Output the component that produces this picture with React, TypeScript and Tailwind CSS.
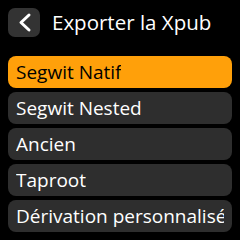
import React from "react";

const items = ["Segwit Natif", "Segwit Nested", "Ancien", "Taproot", "Dérivation personnalisée"];

export default function App() {
  return (
    <div
      className="w-[240px] h-[240px] bg-black overflow-hidden"
      style={{ fontFamily: '"Open Sans", "Noto Sans", sans-serif' }}
    >
      <div className="flex items-center h-[44px] pl-2">
        <div className="w-[32px] h-[29px] rounded-[7px] bg-[#333333] flex items-center justify-center">
          <svg width="32" height="29" viewBox="0 0 32 29">
            <path d="M21 7 L13 14.5 L21 22" fill="none" stroke="white" strokeWidth="3" strokeLinecap="round" strokeLinejoin="round" />
          </svg>
        </div>
        <div className="ml-[12px] text-white text-[20.5px] leading-none">Exporter la Xpub</div>
      </div>
      <div className="flex flex-col gap-[4px] px-2 mt-[12px]">
        {items.map((t, i) => (
          <div
            key={t}
            className={
              i === 0
                ? "h-[32px] rounded-[8px] bg-[#ffa00a] text-black flex items-center px-2"
                : "h-[32px] rounded-[8px] bg-[#2e2e2e] text-white flex items-center px-2"
            }
          >
            <div className="min-w-0 overflow-hidden whitespace-nowrap text-[19px] leading-[32px]">{t}</div>
          </div>
        ))}
      </div>
    </div>
  );
}
